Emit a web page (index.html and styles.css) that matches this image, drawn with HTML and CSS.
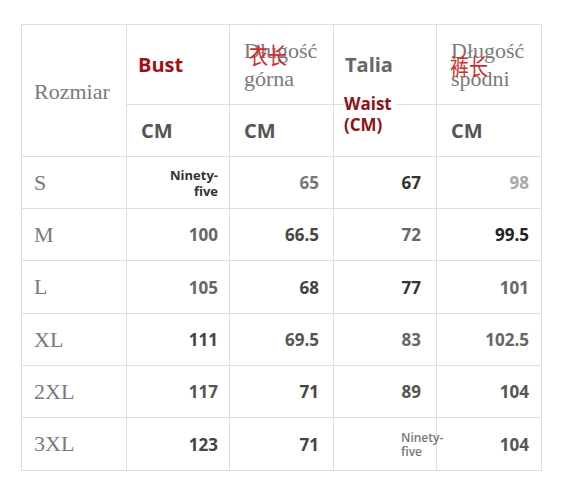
FILE: index.html
```html
<!DOCTYPE html>
<html lang="pl">
<head>
<meta charset="utf-8">
<title>Rozmiar</title>
<link rel="stylesheet" href="styles.css">
</head>
<body>
<table class="size-table">
  <colgroup>
    <col class="c1"><col class="c2"><col class="c3"><col class="c4"><col class="c5">
  </colgroup>
  <thead>
    <tr class="h1">
      <th rowspan="2" class="serif size-head">Rozmiar</th>
      <th class="bust">Bust</th>
      <th class="serif long"><div class="stack"><span class="pl">Długość<br>górna</span><span class="zh zh-top">衣长</span></div></th>
      <th class="talia">Talia</th>
      <th class="serif long"><div class="stack"><span class="pl">Długość<br>spodni</span><span class="zh zh-pants">裤长</span></div></th>
    </tr>
    <tr class="h2">
      <th class="cm">CM</th>
      <th class="cm">CM</th>
      <th class="waist-cell"><div class="waist">Waist<br>(CM)</div></th>
      <th class="cm">CM</th>
    </tr>
  </thead>
  <tbody>
    <tr>
      <td class="serif size">S</td>
      <td class="n2"><div class="words dark">Ninety-<br>five</div></td>
      <td class="n3 g7">65</td>
      <td class="n4 g3">67</td>
      <td class="n5 ga">98</td>
    </tr>
    <tr>
      <td class="serif size">M</td>
      <td class="n2 g6">100</td>
      <td class="n3 g4">66.5</td>
      <td class="n4 g6">72</td>
      <td class="n5 g2">99.5</td>
    </tr>
    <tr class="tall">
      <td class="serif size">L</td>
      <td class="n2 g6">105</td>
      <td class="n3 g4">68</td>
      <td class="n4 g3">77</td>
      <td class="n5 g6">101</td>
    </tr>
    <tr>
      <td class="serif size">XL</td>
      <td class="n2 g4">111</td>
      <td class="n3 g5">69.5</td>
      <td class="n4 g6">83</td>
      <td class="n5 g6">102.5</td>
    </tr>
    <tr>
      <td class="serif size">2XL</td>
      <td class="n2 g5">117</td>
      <td class="n3 g4">71</td>
      <td class="n4 g5">89</td>
      <td class="n5 g5">104</td>
    </tr>
    <tr class="tall">
      <td class="serif size">3XL</td>
      <td class="n2 g4">123</td>
      <td class="n3 g4">71</td>
      <td class="n4 left"><div class="words light">Ninety-<br>five</div></td>
      <td class="n5 g5">104</td>
    </tr>
  </tbody>
</table>
</body>
</html>
```

FILE: styles.css
```css
html, body {
  margin: 0;
  padding: 0;
  background: #ffffff;
}
body {
  padding: 24px 0 0 21px;
  font-family: "Open Sans", "Liberation Sans", sans-serif;
}
.size-table {
  border-collapse: collapse;
  table-layout: fixed;
  width: 520px;
}
.c1 { width: 105px; }
.c2 { width: 103px; }
.c3 { width: 104px; }
.c4 { width: 103px; }
.c5 { width: 105px; }

.size-table th,
.size-table td {
  border: 1px solid #dedede;
  padding: 0;
  vertical-align: middle;
  text-align: left;
  font-weight: 700;
}
.h1 { height: 80px; }
.h2 { height: 52px; }
tbody tr { height: 52px; }
tbody tr.tall { height: 53px; }

.serif {
  font-family: "Liberation Serif", "Times New Roman", serif;
  font-weight: 400 !important;
  color: #7a7a7a;
  font-size: 22px;
}
.size-head { padding-left: 12px !important; padding-top: 2px !important; }
.size { padding-left: 12px !important; }

.bust {
  color: #a50f14;
  font-size: 20px;
  padding-left: 11px !important;
}
.talia {
  color: #666666;
  font-size: 20px;
  padding-left: 11px !important;
}
.cm {
  color: #555555;
  font-size: 20px;
  padding-left: 14px !important;
}
.long {
  padding-left: 14px !important;
}
.stack {
  position: relative;
  line-height: 28px;
}
.pl { display: block; }
.zh {
  position: absolute;
  font-family: "Noto Sans CJK SC", sans-serif;
  font-weight: 400;
  color: #d02c2c;
  font-size: 19px;
  line-height: 1;
  transform: scaleY(1.2);
  transform-origin: top left;
}
.zh-top { left: 5px; top: 5px; }
.zh-pants { left: -1px; top: 16px; }

.waist-cell {
  vertical-align: top !important;
  padding-left: 10px !important;
}
.waist {
  display: inline-block;
  margin-top: -12px;
  background: #ffffff;
  color: #8e1216;
  font-size: 17px;
  line-height: 21px;
  padding-right: 4px;
}

td.n2, td.n3, td.n4, td.n5 {
  text-align: right;
  font-size: 17px;
}
td.n2 { padding-right: 11px; }
td.n3 { padding-right: 14px; }
td.n4 { padding-right: 15px; }
td.n5 { padding-right: 12px; }
td.left { text-align: left; padding-left: 67px; padding-right: 0; }

.words {
  font-size: 13px;
  line-height: 16px;
}
.words.dark { color: #333333; }
.words.light {
  font-size: 12px;
  line-height: 14px;
  font-weight: 600;
  color: #777777;
  white-space: nowrap;
  padding-top: 2px;
}

.g2 { color: #222222; }
.g3 { color: #333333; }
.g4 { color: #444444; }
.g5 { color: #555555; }
.g6 { color: #666666; }
.g7 { color: #777777; }
.ga { color: #aaaaaa; }
```
